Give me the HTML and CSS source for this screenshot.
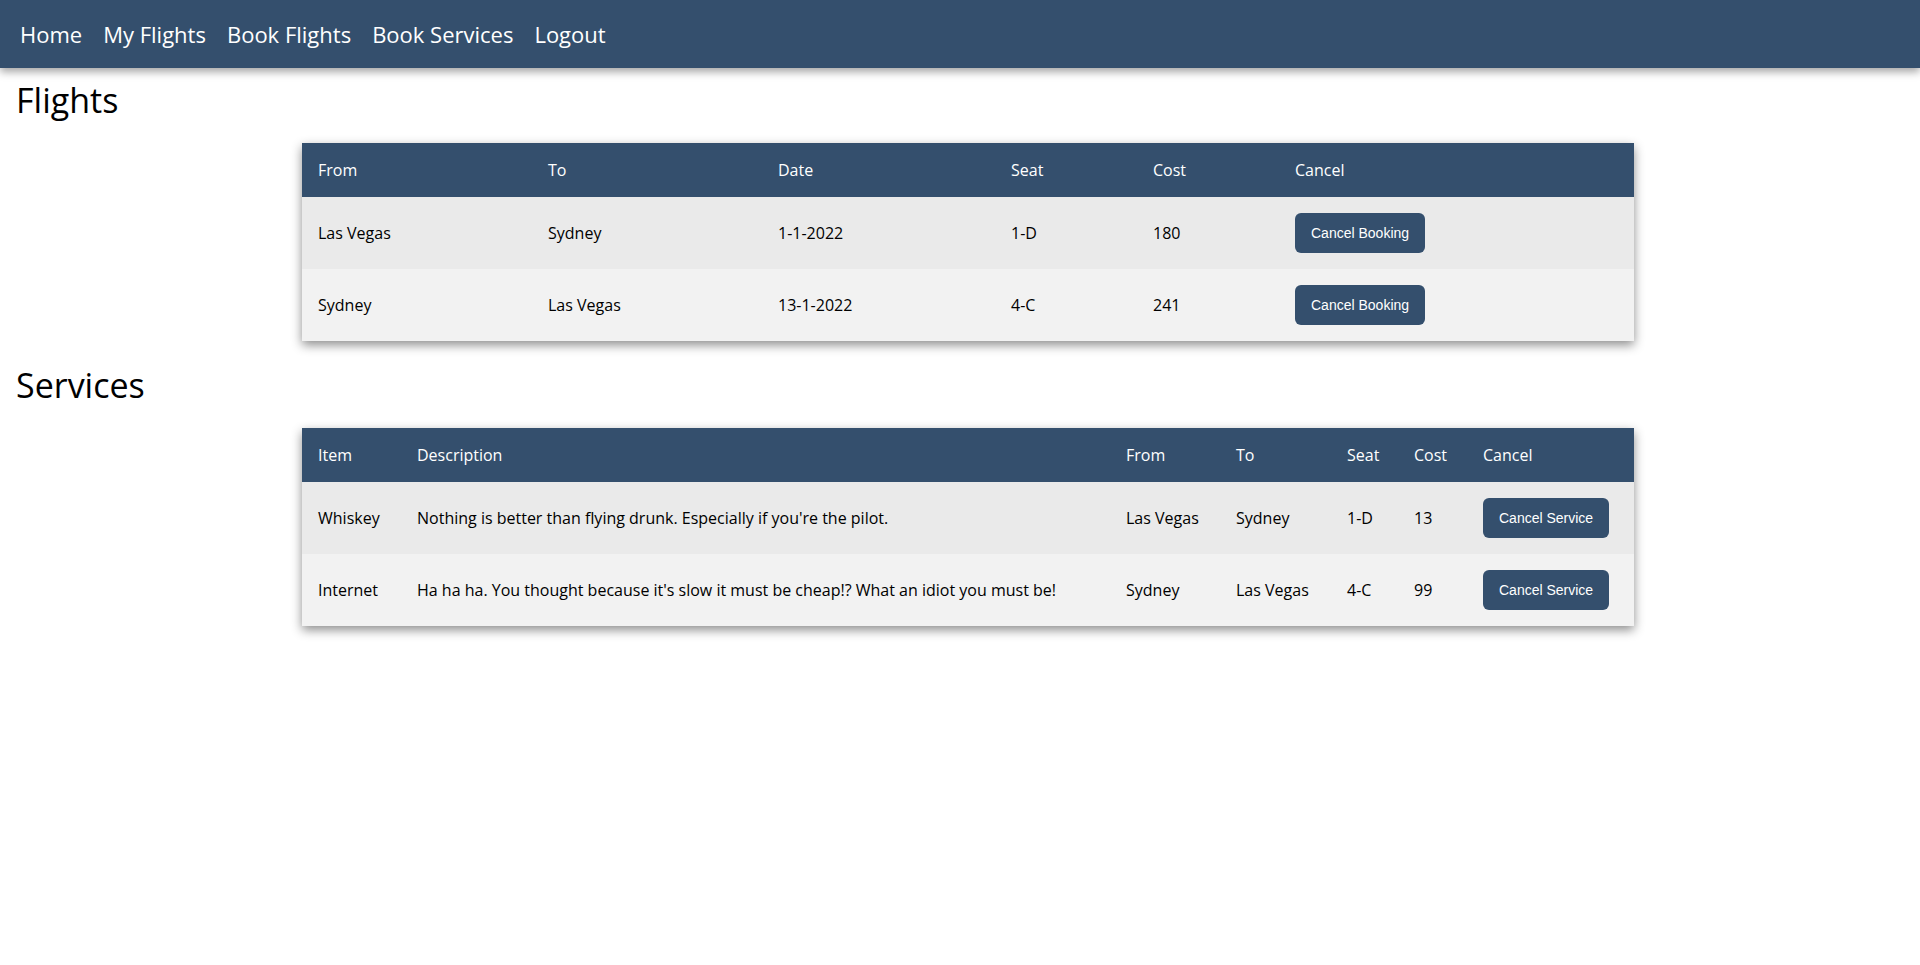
FILE: index.html
```html
<!DOCTYPE html>
<html lang="en">
<head>
<meta charset="utf-8">
<title>My Flights</title>
<link rel="stylesheet" href="styles.css">
</head>
<body>
<nav class="topnav">
  <a class="nav-link" href="#">Home</a>
  <a class="nav-link" href="#">My Flights</a>
  <a class="nav-link" href="#">Book Flights</a>
  <a class="nav-link" href="#">Book Services</a>
  <a class="nav-link" href="#">Logout</a>
</nav>
<main class="content">
  <h1 class="section-title first">Flights</h1>
  <div class="table-wrap">
    <div class="table-card">
      <table class="data-table">
        <colgroup>
          <col class="fc1"><col class="fc2"><col class="fc3"><col class="fc4"><col class="fc5"><col class="fc6">
        </colgroup>
        <thead>
          <tr><th>From</th><th>To</th><th>Date</th><th>Seat</th><th>Cost</th><th>Cancel</th></tr>
        </thead>
        <tbody>
          <tr><td>Las Vegas</td><td>Sydney</td><td>1-1-2022</td><td>1-D</td><td>180</td><td><button class="btn">Cancel Booking</button></td></tr>
          <tr><td>Sydney</td><td>Las Vegas</td><td>13-1-2022</td><td>4-C</td><td>241</td><td><button class="btn">Cancel Booking</button></td></tr>
        </tbody>
      </table>
    </div>
  </div>
  <h1 class="section-title">Services</h1>
  <div class="table-wrap">
    <div class="table-card">
      <table class="data-table">
        <colgroup>
          <col class="sc1"><col class="sc2"><col class="sc3"><col class="sc4"><col class="sc5"><col class="sc6"><col class="sc7">
        </colgroup>
        <thead>
          <tr><th>Item</th><th>Description</th><th>From</th><th>To</th><th>Seat</th><th>Cost</th><th>Cancel</th></tr>
        </thead>
        <tbody>
          <tr><td>Whiskey</td><td>Nothing is better than flying drunk. Especially if you're the pilot.</td><td>Las Vegas</td><td>Sydney</td><td>1-D</td><td>13</td><td><button class="btn">Cancel Service</button></td></tr>
          <tr><td>Internet</td><td>Ha ha ha. You thought because it's slow it must be cheap!? What an idiot you must be!</td><td>Sydney</td><td>Las Vegas</td><td>4-C</td><td>99</td><td><button class="btn">Cancel Service</button></td></tr>
        </tbody>
      </table>
    </div>
  </div>
</main>
</body>
</html>
```
FILE: styles.css
```css
* { box-sizing: border-box; }
html, body {
  margin: 0;
  padding: 0;
  background: #ffffff;
  font-family: "Open Sans", "Noto Sans", sans-serif;
  color: #000;
}
body {
  min-height: 100vh;
}
.topnav {
  position: relative;
  z-index: 2;
  display: flex;
  align-items: center;
  gap: 21px;
  height: 68px;
  padding: 0 20px 1px;
  background: #344f6d;
  box-shadow: 0 4px 8px rgba(0, 0, 0, 0.35);
}
.nav-link {
  color: #ffffff;
  text-decoration: none;
  font-size: 22px;
  line-height: 30px;
}
.content {
  padding-bottom: 60px;
}
.section-title {
  margin: 21px 0 20px;
  padding-left: 16px;
  font-size: 34px;
  font-weight: 400;
  line-height: 46px;
}
.section-title.first {
  margin-top: 9px;
}
.table-wrap {
  padding-left: 16px;
}
.table-card {
  width: 1332px;
  margin: 0 auto;
  box-shadow: 0 4px 10px rgba(0, 0, 0, 0.45);
}
.data-table {
  width: 100%;
  border-collapse: collapse;
  table-layout: fixed;
  font-size: 16px;
}
.data-table th {
  background: #344f6d;
  color: #ffffff;
  font-weight: 400;
  text-align: left;
  padding: 16px;
  line-height: 22px;
}
.data-table td {
  padding: 16px;
  line-height: 22px;
  text-align: left;
  vertical-align: middle;
}
.data-table tbody tr:nth-child(odd) { background: #eaeaea; }
.data-table tbody tr:nth-child(even) { background: #f2f2f2; }
.fc1 { width: 230px; }
.fc2 { width: 230px; }
.fc3 { width: 233px; }
.fc4 { width: 142px; }
.fc5 { width: 142px; }
.fc6 { width: 355px; }
.sc1 { width: 99px; }
.sc2 { width: 709px; }
.sc3 { width: 110px; }
.sc4 { width: 111px; }
.sc5 { width: 67px; }
.sc6 { width: 69px; }
.sc7 { width: 167px; }
.btn {
  display: block;
  border: none;
  border-radius: 6px;
  background: #344f6d;
  color: #ffffff;
  font-family: "Liberation Sans", Arial, sans-serif;
  font-size: 14px;
  line-height: 16px;
  padding: 12px 16px;
  cursor: pointer;
}
```
